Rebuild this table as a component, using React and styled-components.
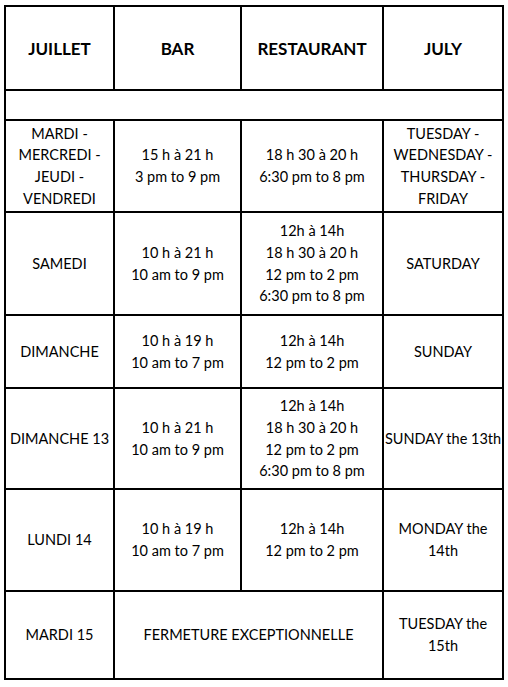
import React from 'react';
import styled, { createGlobalStyle } from 'styled-components';

const GlobalStyle = createGlobalStyle`
  html, body {
    margin: 0;
    padding: 0;
    background: #fff;
  }
  body {
    font-family: Lato, "Open Sans", sans-serif;
    color: #000;
  }
`;

const Page = styled.div`
  padding: 5px 0 0 4px;
`;

const Table = styled.table`
  border-collapse: collapse;
  table-layout: fixed;
  width: 500px;
  border: 2px solid #000;
`;

const HeadCell = styled.th`
  border: 2px solid #000;
  height: 82px;
  padding: 0;
  font-size: 17px;
  font-weight: 700;
  text-align: center;
  vertical-align: middle;
`;

const Cell = styled.td`
  border: 2px solid #000;
  height: ${(p) => p.$h}px;
  padding: 0 1px;
  font-size: 14.5px;
  line-height: 21.7px;
  text-align: center;
  vertical-align: middle;
  white-space: ${(p) => (p.$nowrap ? 'nowrap' : 'normal')};
`;

const rows = [
  {
    day: ['MARDI -', 'MERCREDI -', 'JEUDI -', 'VENDREDI'],
    bar: ['15 h à 21 h', '3 pm to 9 pm'],
    resto: ['18 h 30 à 20 h', '6:30 pm to 8 pm'],
    en: ['TUESDAY -', 'WEDNESDAY -', 'THURSDAY -', 'FRIDAY'],
    h: 90,
  },
  {
    day: ['SAMEDI'],
    bar: ['10 h à 21 h', '10 am to 9 pm'],
    resto: ['12h à 14h', '18 h 30 à 20 h', '12 pm to 2 pm', '6:30 pm to 8 pm'],
    en: ['SATURDAY'],
    h: 101,
  },
  {
    day: ['DIMANCHE'],
    bar: ['10 h à 19 h', '10 am to 7 pm'],
    resto: ['12h à 14h', '12 pm to 2 pm'],
    en: ['SUNDAY'],
    h: 71,
  },
  {
    day: ['DIMANCHE 13'],
    bar: ['10 h à 21 h', '10 am to 9 pm'],
    resto: ['12h à 14h', '18 h 30 à 20 h', '12 pm to 2 pm', '6:30 pm to 8 pm'],
    en: ['SUNDAY the 13th'],
    h: 99,
    nowrap: true,
  },
  {
    day: ['LUNDI 14'],
    bar: ['10 h à 19 h', '10 am to 7 pm'],
    resto: ['12h à 14h', '12 pm to 2 pm'],
    en: ['MONDAY the', '14th'],
    h: 100,
  },
];

function Lines({ items }) {
  return items.map((t, i) => (
    <React.Fragment key={i}>
      {i > 0 && <br />}
      {t}
    </React.Fragment>
  ));
}

export default function App() {
  return (
    <Page>
      <GlobalStyle />
      <Table>
        <colgroup>
          <col style={{ width: 109 }} />
          <col style={{ width: 127 }} />
          <col style={{ width: 142 }} />
          <col style={{ width: 120 }} />
        </colgroup>
        <thead>
          <tr>
            <HeadCell>JUILLET</HeadCell>
            <HeadCell>BAR</HeadCell>
            <HeadCell>RESTAURANT</HeadCell>
            <HeadCell>JULY</HeadCell>
          </tr>
        </thead>
        <tbody>
          <tr>
            <Cell colSpan={4} $h={28} />
          </tr>
          {rows.map((r, i) => (
            <tr key={i}>
              <Cell $h={r.h} $nowrap={r.nowrap}><Lines items={r.day} /></Cell>
              <Cell $h={r.h}><Lines items={r.bar} /></Cell>
              <Cell $h={r.h}><Lines items={r.resto} /></Cell>
              <Cell $h={r.h} $nowrap={r.nowrap}><Lines items={r.en} /></Cell>
            </tr>
          ))}
          <tr>
            <Cell $h={86}>MARDI 15</Cell>
            <Cell $h={86} colSpan={2}>FERMETURE EXCEPTIONNELLE</Cell>
            <Cell $h={86}><Lines items={['TUESDAY the', '15th']} /></Cell>
          </tr>
        </tbody>
      </Table>
    </Page>
  );
}
